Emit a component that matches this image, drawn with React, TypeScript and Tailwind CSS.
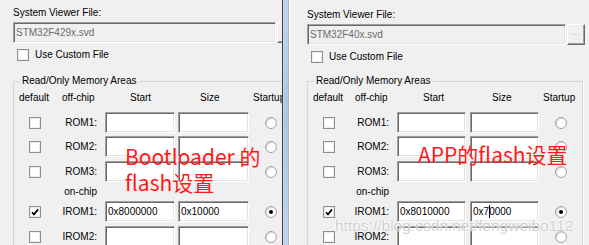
import React from 'react';

const sunken =
  'border border-t-[#a0a0a0] border-l-[#a0a0a0] border-b-white border-r-white shadow-[inset_1px_1px_0_#696969,inset_-1px_-1px_0_#e3e3e3]';

type Cfg = {
  wrap: string;
  editW: string;
  cbRow: string;
  field: string;
  lbl: string;
  start: string;
  gap: string;
  size: string;
  hdr: [string, string, string, string];
};

const leftCfg: Cfg = {
  wrap: 'pl-[13px] pt-[7px]',
  editW: 'w-[263px]',
  cbRow: 'mt-[6px] ml-[4px]',
  field: 'mt-[14px] w-[285px]',
  lbl: 'w-[56px]',
  start: 'w-[70px]',
  gap: 'ml-[3px]',
  size: 'w-[71px]',
  hdr: ['w-[43px]', 'w-[68px]', 'w-[70px]', 'w-[53px]'],
};

const rightCfg: Cfg = {
  wrap: 'pl-[17px] pt-[9px]',
  editW: 'w-[259px]',
  cbRow: 'mt-[6px] ml-[4px]',
  field: 'mt-[12px] w-[276px]',
  lbl: 'w-[54px]',
  start: 'w-[69px]',
  gap: 'ml-[4px]',
  size: 'w-[69px]',
  hdr: ['w-[42px]', 'w-[68px]', 'w-[69px]', 'w-[51px]'],
};

function Edit({ className, disabled, children }: { className?: string; disabled?: boolean; children?: React.ReactNode }) {
  return (
    <div
      className={`${sunken} ${
        disabled ? 'bg-[#f0f0f0] text-[#6d6d6d]' : 'bg-white text-black'
      } flex shrink-0 items-center overflow-hidden whitespace-nowrap pl-[2px] ${className ?? ''}`}
    >
      {children}
    </div>
  );
}

function Check({ checked }: { checked?: boolean }) {
  return (
    <span className="flex h-[12px] w-[12px] shrink-0 items-center justify-center border border-[#8e8f8f] bg-white shadow-[inset_0_0_0_1px_#ededed]">
      {checked && (
        <svg width="8" height="8" viewBox="0 0 8 8">
          <path d="M1 4.2 L3 6.4 L7 1.4" stroke="#000" strokeWidth="1.7" fill="none" />
        </svg>
      )}
    </span>
  );
}

function Radio({ checked }: { checked?: boolean }) {
  return (
    <span className="ml-[16px] flex h-[12px] w-[12px] shrink-0 items-center justify-center rounded-full border border-[#a2a2a2] bg-white shadow-[inset_1px_1px_1px_#d6d6d6]">
      {checked && <span className="h-[4px] w-[4px] rounded-full bg-black" />}
    </span>
  );
}

type RowData = { name: string; checked?: boolean; start?: React.ReactNode; size?: React.ReactNode; startup?: boolean; mt: string };

function Row({ cfg, r }: { cfg: Cfg; r: RowData }) {
  return (
    <div className={`flex h-[21px] items-center ${r.mt}`}>
      <div className="w-[35px] pl-[15px]">
        <Check checked={r.checked} />
      </div>
      <div className={`${cfg.lbl} pr-[8px] text-right`}>{r.name}</div>
      <Edit className={`${cfg.start} h-[21px]`}>{r.start}</Edit>
      <Edit className={`${cfg.gap} ${cfg.size} h-[21px]`}>{r.size}</Edit>
      <Radio checked={r.startup} />
    </div>
  );
}

function Panel({ cfg, file, irom1 }: { cfg: Cfg; file: string; irom1: [React.ReactNode, React.ReactNode] }) {
  const off: RowData[] = [
    { name: 'ROM1:', mt: 'mt-[6px]' },
    { name: 'ROM2:', mt: 'mt-[3px]' },
    { name: 'ROM3:', mt: 'mt-[4px]' },
  ];
  const on: RowData[] = [
    { name: 'IROM1:', checked: true, start: irom1[0], size: irom1[1], startup: true, mt: 'mt-0' },
    { name: 'IROM2:', mt: 'mt-[4px]' },
  ];
  return (
    <div className={cfg.wrap}>
      <div className="h-[12px] leading-[12px]">System Viewer File:</div>
      <div className="mt-[3px] flex">
        <Edit className={`${cfg.editW} h-[21px]`} disabled>
          {file}
        </Edit>
        <div className="ml-px flex h-[21px] w-[18px] shrink-0 items-center justify-center border border-t-white border-l-white border-b-[#696969] border-r-[#696969] bg-[#f0f0f0] pb-[4px] text-[8px] tracking-[1px] text-[#a0a0a0] shadow-[inset_-1px_-1px_0_#a0a0a0]">
          ...
        </div>
      </div>
      <div className={`${cfg.cbRow} flex h-[12px] items-center gap-[6px] leading-[12px]`}>
        <Check />
        <span>Use Custom File</span>
      </div>
      <fieldset className={`${cfg.field} border border-[#d5d5d5] shadow-[1px_1px_0_#fff]`}>
        <legend className="ml-[6px] px-[2px] leading-[12px]">Read/Only Memory Areas</legend>
        <div className="mt-px flex h-[18px] items-center pl-[5px]">
          <span className={cfg.hdr[0]}>default</span>
          <span className={cfg.hdr[1]}>off-chip</span>
          <span className={cfg.hdr[2]}>Start</span>
          <span className={cfg.hdr[3]}>Size</span>
          <span>Startup</span>
        </div>
        {off.map((r) => (
          <Row key={r.name} cfg={cfg} r={r} />
        ))}
        <div className="flex h-[19px] items-center">
          <div className="w-[35px]" />
          <div className={`${cfg.lbl} pr-[8px] text-right`}>on-chip</div>
        </div>
        {on.map((r) => (
          <Row key={r.name} cfg={cfg} r={r} />
        ))}
        <div className="h-[20px]" />
      </fieldset>
    </div>
  );
}

export default function App() {
  return (
    <div className="relative flex h-[245px] w-[589px] overflow-hidden bg-[#f0f0f0] font-['Liberation_Sans',Arial,sans-serif] text-[10px] text-black">
      <div className="w-[282px] shrink-0 overflow-hidden">
        <div className="w-[320px]">
          <Panel cfg={leftCfg} file="STM32F429x.svd" irom1={['0x8000000', '0x10000']} />
        </div>
      </div>
      <div className="flex shrink-0">
        <div className="w-px bg-[#3c3c3c]" />
        <div className="w-px bg-[#d8d8d8]" />
        <div className="w-[4px] bg-gradient-to-b from-[#bcd5f2] via-[#a9c6e8] to-[#bcd5f2]" />
        <div className="w-px bg-[#a5b6c8]" />
        <div className="w-px bg-white" />
      </div>
      <div className="min-w-0 flex-1">
        <Panel
          cfg={rightCfg}
          file="STM32F40x.svd"
          irom1={[
            '0x8010000',
            <span key="s">
              0x7<span className="-mr-px inline-block h-[13px] w-px bg-black align-[-3px]" />0000
            </span>,
          ]}
        />
      </div>

      {/* red annotations drawn over the screenshot */}
      <div className="absolute left-[125px] top-[143px] font-['Noto_Sans_CJK_SC',sans-serif] text-[21px] leading-[26px] text-[#ff1a1a]">
        <div>Bootloader 的</div>
        <div>flash设置</div>
      </div>
      <div className="absolute left-[418px] top-[141px] font-['Noto_Sans_CJK_SC',sans-serif] text-[21px] leading-[26px] text-[#ff1a1a]">
        APP的flash设置
      </div>

      {/* watermark */}
      <div className="absolute left-[335px] top-[217px] font-['Liberation_Sans',Arial,sans-serif] text-[15.5px] leading-[18px] text-black/20 [text-shadow:0_0_2px_#fff,0_0_1px_#fff]">
        https://blog.csdn.net/fengweibo112
      </div>
    </div>
  );
}
